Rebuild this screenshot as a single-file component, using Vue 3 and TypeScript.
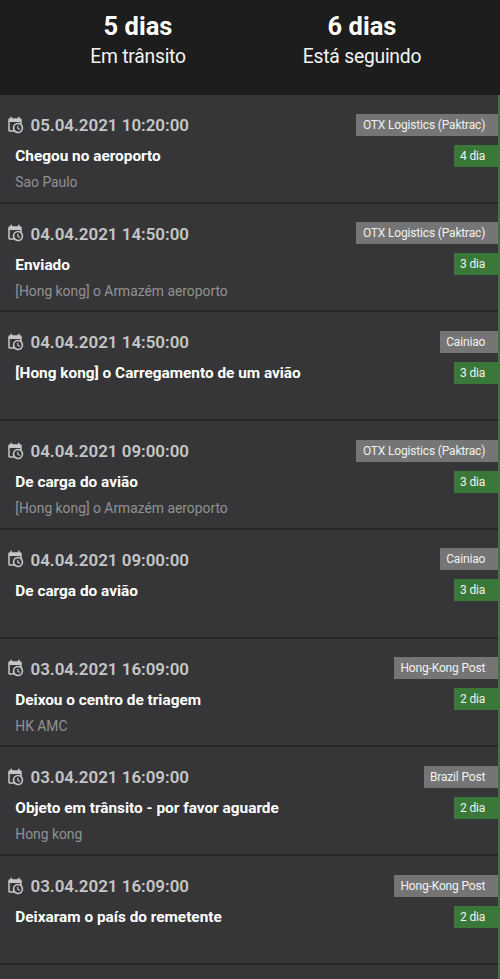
<script setup lang="ts">
interface Stat {
  value: string
  label: string
}

interface TrackingEvent {
  date: string
  title: string
  place: string
  carrier: string
  day: string
}

const stats: Stat[] = [
  { value: '5 dias', label: 'Em trânsito' },
  { value: '6 dias', label: 'Está seguindo' },
]

const events: TrackingEvent[] = [
  { date: '05.04.2021 10:20:00', title: 'Chegou no aeroporto', place: 'Sao Paulo', carrier: 'OTX Logistics (Paktrac)', day: '4 dia' },
  { date: '04.04.2021 14:50:00', title: 'Enviado', place: '[Hong kong] o Armazém aeroporto', carrier: 'OTX Logistics (Paktrac)', day: '3 dia' },
  { date: '04.04.2021 14:50:00', title: '[Hong kong] o Carregamento de um avião', place: '', carrier: 'Cainiao', day: '3 dia' },
  { date: '04.04.2021 09:00:00', title: 'De carga do avião', place: '[Hong kong] o Armazém aeroporto', carrier: 'OTX Logistics (Paktrac)', day: '3 dia' },
  { date: '04.04.2021 09:00:00', title: 'De carga do avião', place: '', carrier: 'Cainiao', day: '3 dia' },
  { date: '03.04.2021 16:09:00', title: 'Deixou o centro de triagem', place: 'HK AMC', carrier: 'Hong-Kong Post', day: '2 dia' },
  { date: '03.04.2021 16:09:00', title: 'Objeto em trânsito - por favor aguarde', place: 'Hong kong', carrier: 'Brazil Post', day: '2 dia' },
  { date: '03.04.2021 16:09:00', title: 'Deixaram o país do remetente', place: '', carrier: 'Hong-Kong Post', day: '2 dia' },
]
</script>

<template>
  <main class="screen">
    <header class="summary">
      <div v-for="stat in stats" :key="stat.label" class="stat">
        <strong class="stat-value">{{ stat.value }}</strong>
        <span class="stat-label">{{ stat.label }}</span>
      </div>
    </header>
    <ul class="events">
      <li v-for="(event, index) in events" :key="index" class="event">
        <div class="details">
          <div class="when">
            <svg class="icon" viewBox="0 0 24 24" aria-hidden="true">
              <path d="M15,13H16.5V15.82L18.94,17.23L18.19,18.53L15,16.69V13M19,8H5V19H9.67C9.24,18.09 9,17.07 9,16A7,7 0 0,1 16,9C17.07,9 18.09,9.24 19,9.67V8M5,21C3.89,21 3,20.1 3,19V5C3,3.89 3.89,3 5,3H6V1H8V3H16V1H18V3H19A2,2 0 0,1 21,5V11.1C22.24,12.36 23,14.09 23,16A7,7 0 0,1 16,23C14.09,23 12.36,22.24 11.1,21H5M16,11.15A4.85,4.85 0 0,0 11.15,16C11.15,18.68 13.32,20.85 16,20.85A4.85,4.85 0 0,0 20.85,16C20.85,13.32 18.68,11.15 16,11.15Z" />
            </svg>
            <time class="date">{{ event.date }}</time>
          </div>
          <div class="title">{{ event.title }}</div>
          <div v-if="event.place" class="place">{{ event.place }}</div>
        </div>
        <div class="tags">
          <span class="tag">{{ event.carrier }}</span>
          <span class="tag day">{{ event.day }}</span>
        </div>
      </li>
    </ul>
  </main>
</template>

<style>
body {
  background: #363638;
}
</style>

<style scoped>
.screen {
  height: 979px;
  overflow: hidden;
  display: flex;
  flex-direction: column;
  background: #363638;
  color: #fff;
  font-family: Roboto, 'Liberation Sans', sans-serif;
}

.summary {
  flex: none;
  box-sizing: border-box;
  height: 95px;
  padding: 10px 26px 0;
  display: flex;
  background: #1d1d1d;
}

.stat {
  flex: 1;
  display: flex;
  flex-direction: column;
  align-items: center;
  white-space: nowrap;
}

.stat-value {
  font-size: 25.5px;
  line-height: 33px;
  font-weight: 700;
}

.stat-label {
  font-size: 19.3px;
  letter-spacing: -0.22px;
  line-height: 28px;
  color: #f4f4f4;
}

.events {
  flex: 1;
  margin: 0;
  padding: 0;
  list-style: none;
  border-right: 2px solid #397839;
}

.event {
  box-sizing: border-box;
  height: 108.73px;
  display: flex;
  justify-content: space-between;
  border-bottom: 2px solid #272728;
  white-space: nowrap;
}

.details {
  padding: 19px 0 0 6.3px;
}

.when {
  display: flex;
  align-items: center;
  height: 22px;
  gap: 6.2px;
}

.icon {
  width: 18px;
  height: 18px;
  margin-bottom: 1px;
  fill: #c6c6c6;
}

.date {
  font-size: 16.95px;
  line-height: 22px;
  font-weight: 600;
  color: #c6c6c6;
}

.title {
  padding: 9px 0 0 9px;
  font-size: 15.37px;
  line-height: 22px;
  font-weight: 700;
}

.place {
  padding: 5px 0 0 9px;
  font-size: 13.85px;
  line-height: 20px;
  color: #929294;
}

.tags {
  padding-top: 18.5px;
  display: flex;
  flex-direction: column;
  align-items: flex-end;
  gap: 9px;
}

.tag {
  height: 22px;
  padding: 0 12.8px 0 6.5px;
  background: #757575;
  color: #f1f1f1;
  font-size: 12px;
  letter-spacing: -0.17px;
  line-height: 22px;
}

.day {
  background: #397839;
}
</style>
